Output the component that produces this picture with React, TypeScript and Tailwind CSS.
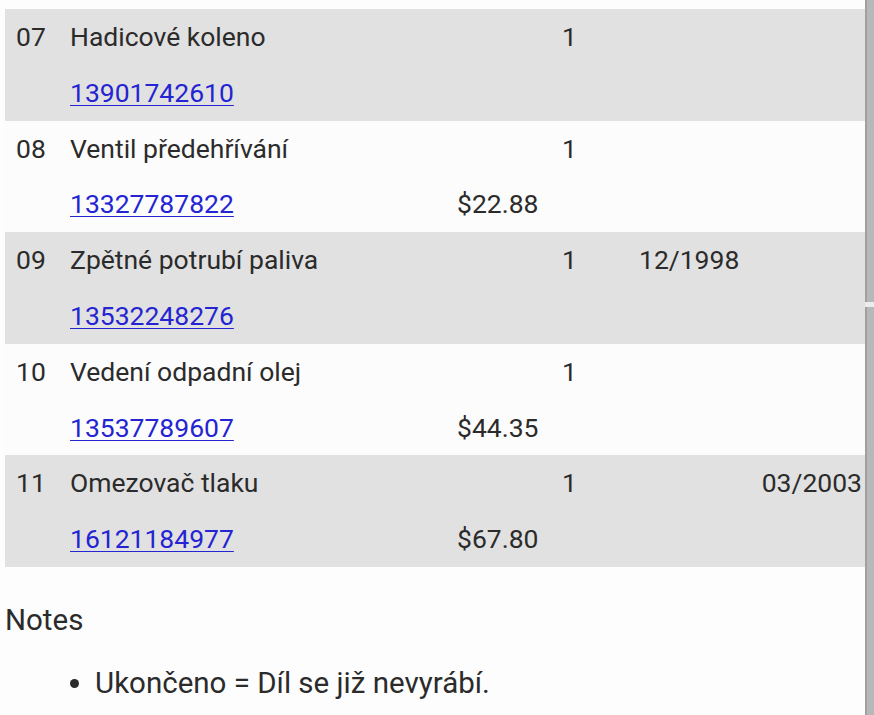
import React from "react";

type Row = {
  no: string;
  name: string;
  part: string;
  price?: string;
  qty: string;
  from?: string;
  to?: string;
  gray: boolean;
};

const rows: Row[] = [
  { no: "07", name: "Hadicové koleno", part: "13901742610", qty: "1", gray: true },
  { no: "08", name: "Ventil předehřívání", part: "13327787822", price: "$22.88", qty: "1", gray: false },
  { no: "09", name: "Zpětné potrubí paliva", part: "13532248276", qty: "1", from: "12/1998", gray: true },
  { no: "10", name: "Vedení odpadní olej", part: "13537789607", price: "$44.35", qty: "1", gray: false },
  { no: "11", name: "Omezovač tlaku", part: "16121184977", price: "$67.80", qty: "1", to: "03/2003", gray: true },
];

export default function App() {
  return (
    <div
      className="flex h-[715px] w-[874px] overflow-hidden bg-[#fdfdfd] text-[#2b2b2b]"
      style={{ fontFamily: "Roboto, 'Noto Sans', sans-serif" }}
    >
      <div className="flex-1 pt-[9px] pl-[5px]">
        {rows.map((r) => (
          <div
            key={r.no}
            className={`grid h-[111.6px] grid-cols-[65px_387px_105px_77px_122px_1fr] grid-rows-2 text-[26.5px] ${
              r.gray ? "bg-[#e1e1e1]" : "bg-[#fcfcfc]"
            }`}
          >
            <div className="flex items-center pl-[11px]">{r.no}</div>
            <div className="flex items-center">{r.name}</div>
            <div />
            <div className="flex items-center">{r.qty}</div>
            <div className="flex items-center">{r.from ?? ""}</div>
            <div className="flex items-center justify-end pr-[3px]">{r.to ?? ""}</div>
            <div />
            <div className="flex items-center">
              <a href="#" className="text-[#2424d2] underline decoration-1 underline-offset-[3px]">
                {r.part}
              </a>
            </div>
            <div className="flex items-center">{r.price ?? ""}</div>
            <div />
            <div />
            <div />
          </div>
        ))}
        <div className="pt-[33px] text-[29.5px]">
          <div className="leading-[40px]">Notes</div>
          <ul className="mt-[23px] list-disc pl-[90px]">
            <li className="leading-[40px]">Ukončeno = Díl se již nevyrábí.</li>
          </ul>
        </div>
      </div>
      <div className="flex w-[9px] flex-col">
        <div className="h-[302px] border-l-2 border-[#a0a0a0] bg-[#b8b8b8]" />
        <div className="h-[5px] bg-[#ececec]" />
        <div className="flex-1 border-l-2 border-[#a0a0a0] bg-[#b8b8b8]" />
      </div>
    </div>
  );
}
